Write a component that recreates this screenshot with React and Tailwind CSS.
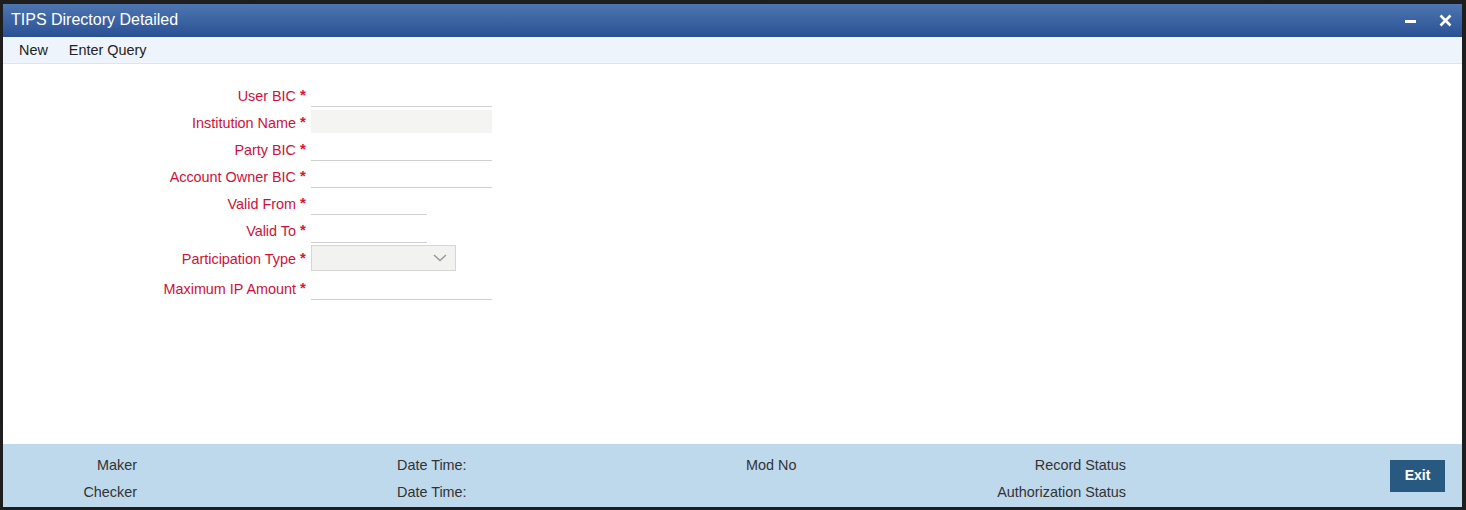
import { useState } from "react";

const fields = [
  { label: "User BIC", kind: "text", h: "h-[27px]" },
  { label: "Institution Name", kind: "readonly", h: "h-[27px]" },
  { label: "Party BIC", kind: "text", h: "h-[27px]" },
  { label: "Account Owner BIC", kind: "text", h: "h-[27px]" },
  { label: "Valid From", kind: "date", h: "h-[27px]" },
  { label: "Valid To", kind: "date", h: "h-[28px]" },
  { label: "Participation Type", kind: "select", h: "h-[28px]" },
  { label: "Maximum IP Amount", kind: "text", h: "h-[31px]" },
];

function Field({ field }) {
  const [value, setValue] = useState("");
  let input;
  if (field.kind === "readonly") {
    input = <div className="w-[181px] h-[23px] bg-[#f4f4f2]" />;
  } else if (field.kind === "select") {
    input = (
      <div className="w-[145px] h-[26px] bg-[#f2f2f0] border border-[#d6d6d4] flex items-center justify-end pr-[8px]">
        <svg width="14" height="8" viewBox="0 0 14 8" fill="none">
          <path d="M1 1l6 5.5L13 1" stroke="#9a9a9a" strokeWidth="1.5" />
        </svg>
      </div>
    );
  } else {
    input = (
      <input
        value={value}
        onChange={(e) => setValue(e.target.value)}
        className={`${field.kind === "date" ? "w-[116px]" : "w-[181px]"} h-[24px] mt-[1px] border-b border-[#cfcfcf] bg-transparent outline-none text-[14px]`}
      />
    );
  }
  return (
    <div className={`flex items-center ${field.h}`}>
      <span className="w-[293px] pt-[4px] text-right text-[14.4px] text-[#d0103a]">{field.label}</span>
      <span className="w-[15px] pl-[4px] text-[15px] font-bold text-[#e3122f] mt-[1px]">*</span>
      {input}
    </div>
  );
}

export default function App() {
  return (
    <div className="w-[1466px] h-[510px] bg-[#1e1e1e] pt-[4px] pl-[3px] pr-[4px] pb-[3px] flex font-['Liberation_Sans',Arial,sans-serif]">
      <div className="flex-1 flex flex-col bg-white">
        <div className="h-[33px] bg-gradient-to-b from-[#4e76b0] to-[#2a5093] flex items-center pl-[8px] pr-[10px]">
          <span className="text-white text-[16px] -mt-[1px]">TIPS Directory Detailed</span>
          <div className="ml-auto flex items-center gap-[23px]">
            <div className="w-[11px] h-[3px] bg-white mt-[2px]" />
            <svg width="13" height="13" viewBox="0 0 13 13">
              <path d="M1.5 1.5l10 10M11.5 1.5l-10 10" stroke="white" strokeWidth="2.6" />
            </svg>
          </div>
        </div>
        <div className="h-[27px] bg-[#eef4fc] border-b border-[#dde5ee] flex items-center pt-[2px] pl-[16px] gap-[21px] text-[14.4px] text-[#222]">
          <span>New</span>
          <span>Enter Query</span>
        </div>
        <div className="flex-1 pt-[17px]">
          {fields.map((f) => (
            <Field key={f.label} field={f} />
          ))}
        </div>
        <div className="h-[63px] bg-[#bed8ec] flex items-center pt-[8px] text-[14.4px] text-[#333]">
          <div className="w-[134px] flex flex-col items-end gap-[5px]">
            <span>Maker</span>
            <span>Checker</span>
          </div>
          <div className="ml-[260px] w-[349px] flex flex-col gap-[5px]">
            <span>Date Time:</span>
            <span>Date Time:</span>
          </div>
          <div className="w-[100px] flex flex-col gap-[5px]">
            <span>Mod No</span>
            <span className="invisible">-</span>
          </div>
          <div className="w-[280px] flex flex-col items-end gap-[5px]">
            <span>Record Status</span>
            <span>Authorization Status</span>
          </div>
          <button className="ml-[264px] -mt-[8px] w-[55px] h-[32px] bg-[#285a81] text-white font-bold text-[14px]">
            Exit
          </button>
        </div>
      </div>
    </div>
  );
}
